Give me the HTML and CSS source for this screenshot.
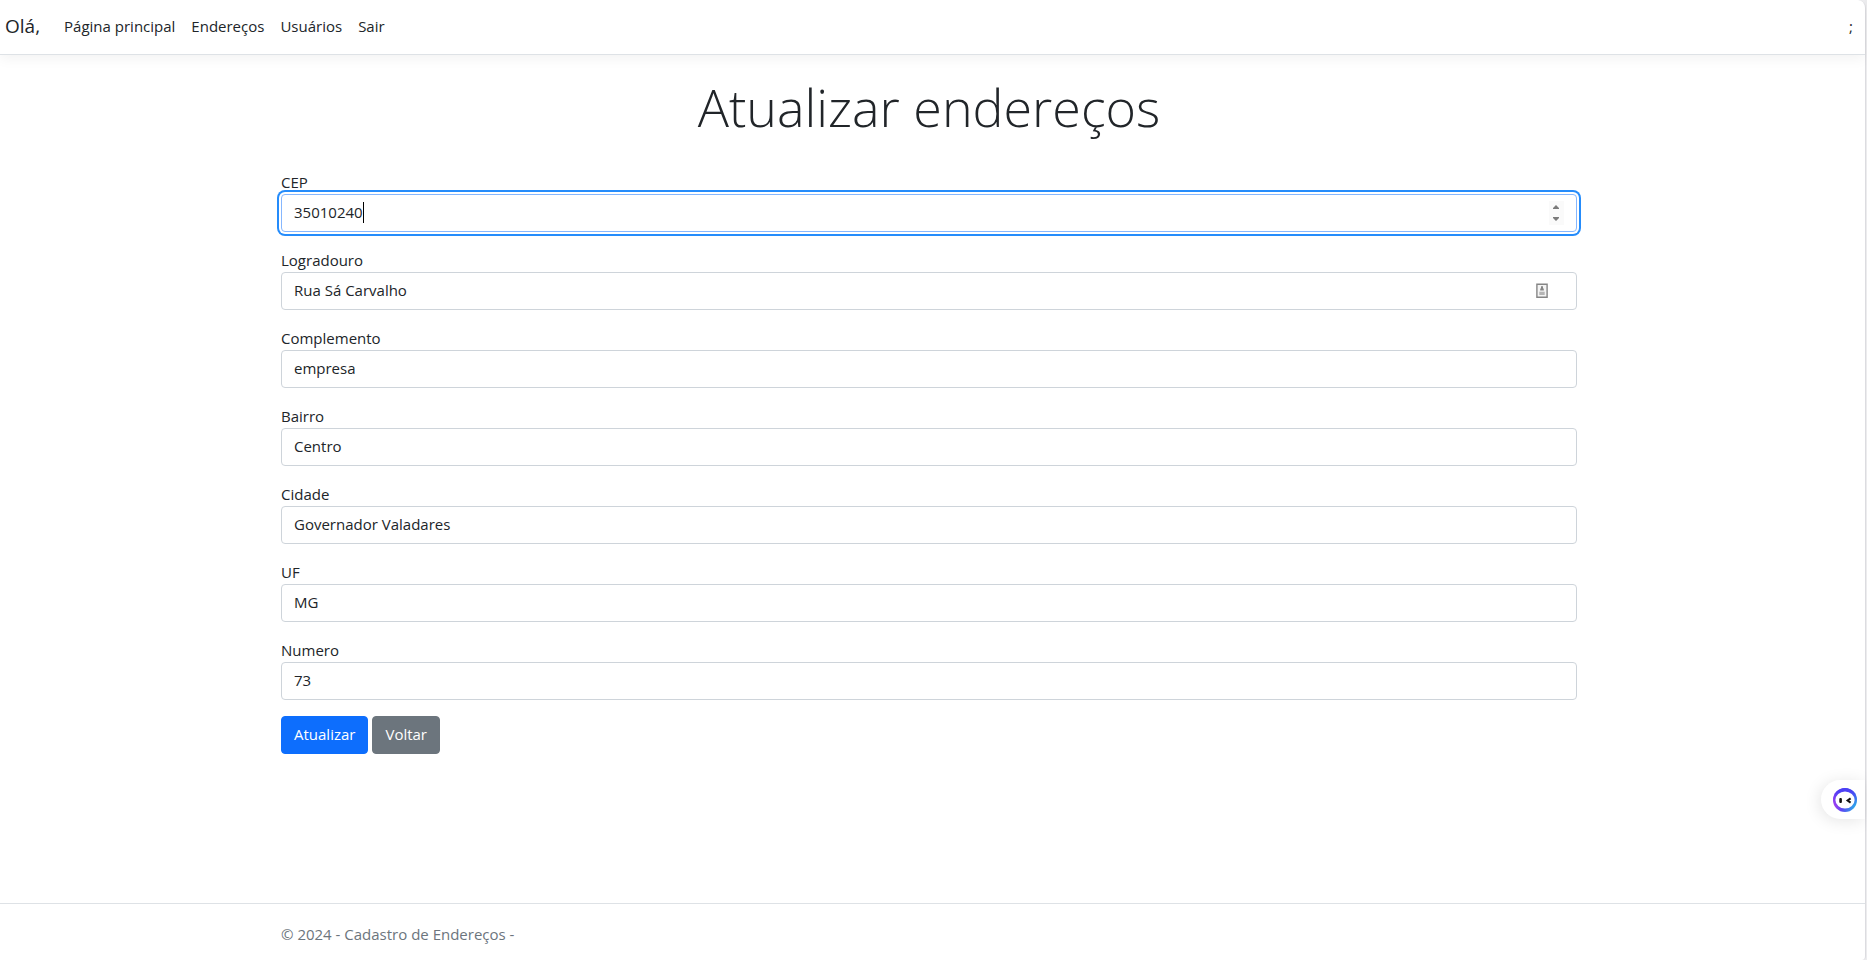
FILE: index.html
```
<!DOCTYPE html>
<html lang="pt-BR">
<head>
<meta charset="utf-8">
<title>Atualizar endereços - Cadastro de Endereços</title>
<link rel="stylesheet" href="styles.css">
</head>
<body>
<div class="page">
  <header class="navbar">
    <a class="brand" href="#">Olá,</a>
    <nav class="nav">
      <a class="nav-link" href="#">Página principal</a>
      <a class="nav-link" href="#">Endereços</a>
      <a class="nav-link" href="#">Usuários</a>
      <a class="nav-link" href="#">Sair</a>
    </nav>
    <span class="nav-end">;</span>
  </header>
  <main class="main">
    <div class="container">
      <h1 class="title">Atualizar endereços</h1>
      <form class="form">
        <div class="group">
          <label for="cep">CEP</label>
          <div class="field">
            <input class="control control-active" id="cep" type="number" value="35010240" autofocus>
            <span class="caret-line" aria-hidden="true"><span class="caret-space">35010240</span></span>
            <svg class="spinner" viewBox="0 0 15 24" aria-hidden="true"><path fill="#fafafa" d="M0 0h15v24H0z"/><path fill="#7b7b7b" d="M4 8v-1l3-3 3 3v1zM4 16v1l3 3 3-3v-1z"/></svg>
          </div>
        </div>
        <div class="group">
          <label for="logradouro">Logradouro</label>
          <div class="field">
            <input class="control" id="logradouro" type="text" value="Rua Sá Carvalho">
            <svg class="autofill" viewBox="0 0 12 16" aria-hidden="true"><path fill="#f4f4f4" stroke="#858585" stroke-width="1.4" d="M.9 1.2h10.2v13.1H.9z"/><path fill="#858585" d="M5 3.2h2v2.4H5zM4.2 5.5h3.6v2H4.2z"/><path fill="#b5b5b5" d="M3.3 8.7h5.4v3.3H3.3z"/></svg>
          </div>
        </div>
        <div class="group">
          <label for="complemento">Complemento</label>
          <input class="control" id="complemento" type="text" value="empresa">
        </div>
        <div class="group">
          <label for="bairro">Bairro</label>
          <input class="control" id="bairro" type="text" value="Centro">
        </div>
        <div class="group">
          <label for="cidade">Cidade</label>
          <input class="control" id="cidade" type="text" value="Governador Valadares">
        </div>
        <div class="group">
          <label for="uf">UF</label>
          <input class="control" id="uf" type="text" value="MG">
        </div>
        <div class="group">
          <label for="numero">Numero</label>
          <input class="control" id="numero" type="text" value="73">
        </div>
        <div class="actions">
          <button class="btn btn-primary" type="submit">Atualizar</button>
          <a class="btn btn-secondary" href="#">Voltar</a>
        </div>
      </form>
    </div>
  </main>
  <footer class="footer">
    <div class="container">© 2024 - Cadastro de Endereços -</div>
  </footer>
</div>
<button class="assistant" type="button" aria-label="Assistente">
  <svg class="assistant-icon" viewBox="0 0 24 24">
    <defs><linearGradient id="ring" x1="0" y1=".65" x2="1" y2=".8"><stop offset="0" stop-color="#b03bf0"/><stop offset=".4" stop-color="#5a48f2"/><stop offset="1" stop-color="#25b8e8"/></linearGradient>
    <linearGradient id="top" x1="0" y1="0" x2="0" y2="1"><stop offset=".1" stop-color="#4b40f5"/><stop offset=".75" stop-color="#4b40f5" stop-opacity="0"/></linearGradient></defs>
    <circle cx="12" cy="12" r="12" fill="url(#ring)"/><circle cx="12" cy="12" r="12" fill="url(#top)"/>
    <ellipse cx="12" cy="12" rx="9.6" ry="8.6" fill="#fff"/>
    <rect x="6.3" y="10" width="2.6" height="5" rx="1" fill="#111"/>
    <path d="M17.6 10.4l-3 2.1 3 2.1" fill="none" stroke="#111" stroke-width="2"/>
  </svg>
</button>
</body>
</html>
```
FILE: styles.css
```
* {
  box-sizing: border-box;
}

html {
  height: 100%;
  background: #ececee;
}

body {
  height: 100%;
  margin: 0;
  overflow: hidden;
  font: 15px/24px "Segoe UI", "Open Sans", "Noto Sans", sans-serif;
  color: #212529;
}

a {
  color: inherit;
  text-decoration: none;
}

.page {
  display: flex;
  flex-direction: column;
  min-height: 100%;
  margin-right: 1px;
  background: #fff;
  border-right: 1px solid #dcdce0;
  border-radius: 0 8px 4px 0;
}

.navbar {
  display: flex;
  align-items: center;
  height: 55px;
  padding: 0 12px 2px 5px;
  border-bottom: 1px solid #dee2e6;
  box-shadow: 0 4px 12px rgba(0, 0, 0, 0.05);
}

.brand {
  margin-right: 24px;
  font-size: 19px;
}

.nav {
  display: flex;
  flex: 1;
  gap: 16px;
}

.container {
  width: 100%;
  max-width: 1320px;
  margin: 0 auto;
  padding: 0 12px;
}

.main {
  flex: 1;
  padding: 18px 7px 0 0;
}

.title {
  margin: 0 0 30px;
  font-size: 52px;
  font-weight: 300;
  line-height: 67px;
  text-align: center;
}

.form {
  display: flex;
  flex-direction: column;
  gap: 16px;
}

.group {
  display: flex;
  flex-direction: column;
}

.field {
  position: relative;
}

.control {
  display: block;
  width: 100%;
  height: 38px;
  padding: 5px 12px 7px;
  border: 1px solid #ced4da;
  border-radius: 4px;
  outline: 0;
  background: #fff;
  color: inherit;
  font: inherit;
  appearance: none;
}

.control-active {
  border-color: #86b7fe;
  box-shadow: 0 0 0 2px #fff, 0 0 0 4px #258cfb;
  caret-color: transparent;
  appearance: textfield;
}

.control::-webkit-inner-spin-button {
  display: none;
}

.caret-line {
  position: absolute;
  top: 8px;
  left: 13px;
  height: 21px;
  border-right: 1px solid #000;
  pointer-events: none;
}

.caret-space {
  visibility: hidden;
}

.spinner {
  position: absolute;
  top: 7px;
  right: 13px;
  width: 15px;
  height: 24px;
}

.autofill {
  position: absolute;
  top: 11px;
  right: 29px;
  width: 12px;
  height: 16px;
}

.actions {
  display: flex;
  gap: 4px;
}

.btn {
  padding: 5px 12px 7px;
  border: 1px solid;
  border-radius: 4px;
  color: #fff;
  font: inherit;
}

.btn-primary {
  border-color: #0d6efd;
  background: #0d6efd;
}

.btn-secondary {
  border-color: #6c757d;
  background: #6c757d;
}

.footer {
  padding: 18px 7px 14px 0;
  border-top: 1px solid #dee2e6;
  color: #6c757d;
}

.assistant {
  position: fixed;
  right: 2px;
  bottom: 141px;
  display: flex;
  align-items: center;
  height: 39px;
  padding: 0 8px 0 12px;
  border: 0;
  border-radius: 20px 0 0 20px;
  background: #fff;
  box-shadow: -2px 2px 16px rgba(0, 0, 0, 0.1);
}

.assistant-icon {
  width: 24px;
  height: 24px;
}
```
